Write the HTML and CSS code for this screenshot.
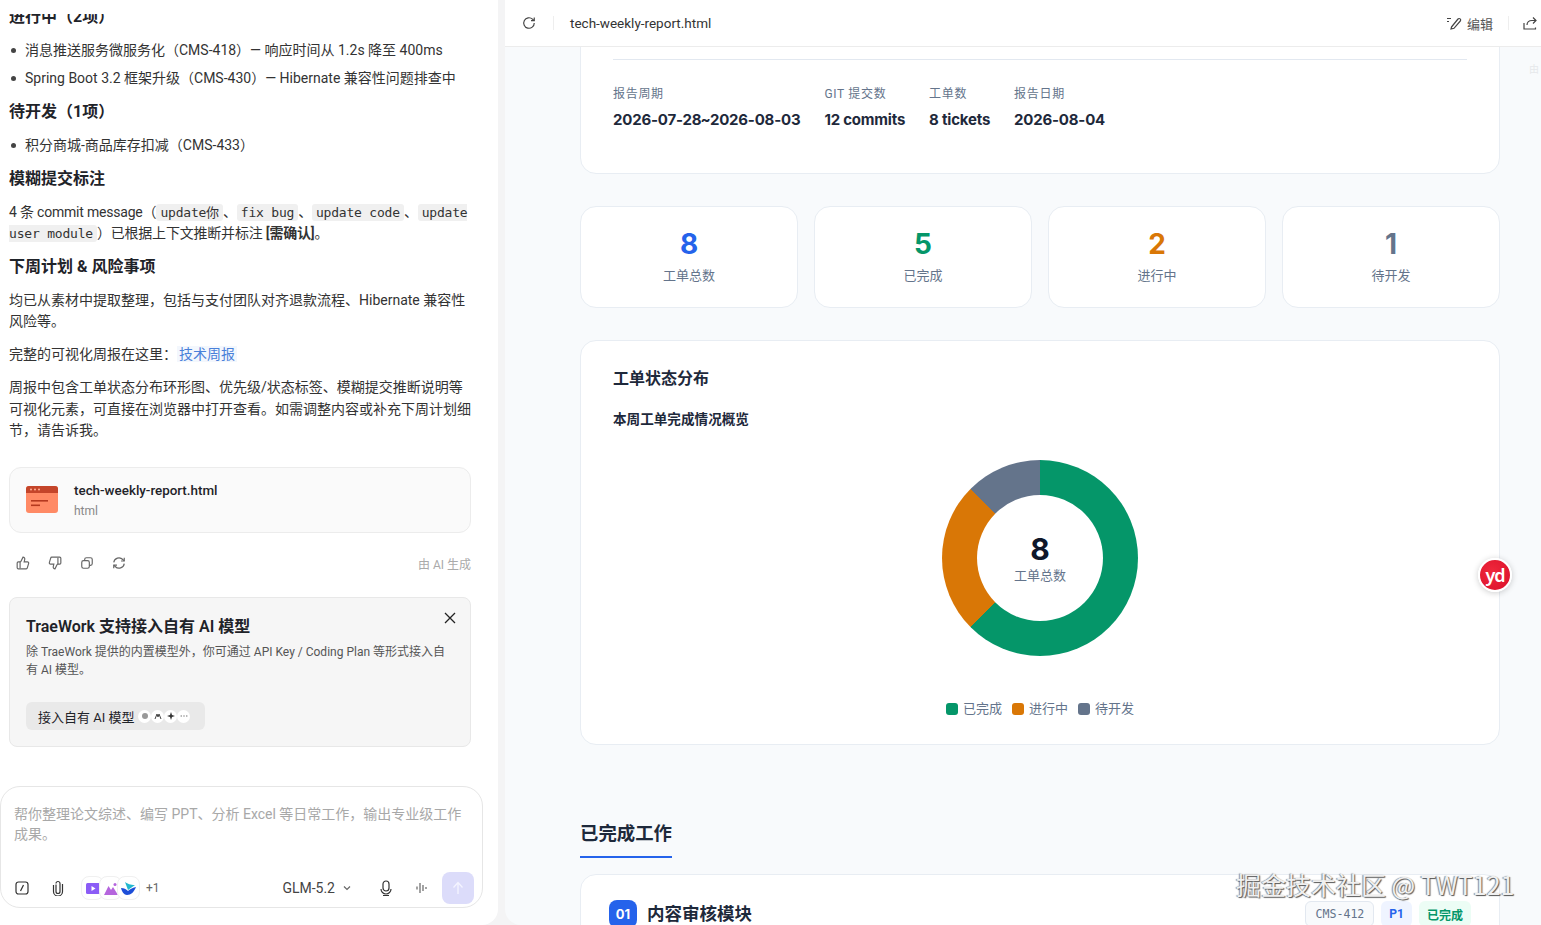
FILE: index.html
```html
<!DOCTYPE html>
<html lang="zh-CN">
<head>
    <meta charset="UTF-8">
    <title>tech-weekly-report.html</title>
    <link rel="stylesheet" href="styles.css">
</head>
<body>
    <aside class="left">
        <div class="chat">
            <div class="chat-inner">
                <h3>进行中（2项）</h3>
                <ul>
                    <li>消息推送服务微服务化（CMS-418）— 响应时间从 1.2s 降至 400ms</li>
                    <li>Spring Boot 3.2 框架升级（CMS-430）— Hibernate 兼容性问题排查中</li>
                </ul>
                <h3>待开发（1项）</h3>
                <ul>
                    <li>积分商城-商品库存扣减（CMS-433）</li>
                </ul>
                <h3>模糊提交标注</h3>
                <p class="tight">4 条 commit message（<code>update你</code>、<code>fix bug</code>、<code>update code</code>、<code>update user module</code>）已根据上下文推断并标注 <b>[需确认]</b>。</p>
                <h3>下周计划 &amp; 风险事项</h3>
                <p>均已从素材中提取整理，包括与支付团队对齐退款流程、Hibernate 兼容性风险等。</p>
                <p>完整的可视化周报在这里：<a class="link">技术周报</a></p>
                <p>周报中包含工单状态分布环形图、优先级/状态标签、模糊提交推断说明等可视化元素，可直接在浏览器中打开查看。如需调整内容或补充下周计划细节，请告诉我。</p>

                <div class="file-card">
                    <svg class="file-icon" width="32" height="28" viewBox="0 0 32 28">
                        <rect y="0" width="32" height="27" rx="3" fill="#ff8a65"/>
                        <path d="M0 7V3a3 3 0 0 1 3-3h26a3 3 0 0 1 3 3v4z" fill="#c4452a"/>
                        <circle cx="5" cy="3.6" r="1" fill="#ffb199"/>
                        <circle cx="9" cy="3.6" r="1" fill="#ffb199"/>
                        <circle cx="13" cy="3.6" r="1" fill="#ffb199"/>
                        <rect x="5" y="14" width="17" height="1.6" fill="#b5391f"/>
                        <rect x="5" y="18.5" width="9" height="1.6" fill="#b5391f"/>
                    </svg>
                    <div class="file-text">
                        <div class="file-name">tech-weekly-report.html</div>
                        <div class="file-type">html</div>
                    </div>
                </div>

                <div class="actions">
                    <svg class="ico" viewBox="0 0 24 24"><path d="M7 10v11"/><path d="M15 5.9 14 10h5.8a2 2 0 0 1 1.9 2.5l-2.3 8a2 2 0 0 1-1.9 1.5H4a2 2 0 0 1-2-2v-8a2 2 0 0 1 2-2h2.800a2 2 0 0 0 1.800-1.100L12 2a3.100 3.100 0 0 1 3 3.900z"/></svg>
                    <svg class="ico" viewBox="0 0 24 24"><path d="M17 14V3"/><path d="M9 18.100 10 14H4.200a2 2 0 0 1-1.900-2.500l2.300-8A2 2 0 0 1 6.500 2H20a2 2 0 0 1 2 2v8a2 2 0 0 1-2 2h-2.800a2 2 0 0 0-1.800 1.100L12 22a3.100 3.100 0 0 1-3-3.900z"/></svg>
                    <svg class="ico" viewBox="0 0 24 24"><rect x="3" y="8" width="13" height="13" rx="3"/><path d="M8 8V6a3 3 0 0 1 3-3h7a3 3 0 0 1 3 3v7a3 3 0 0 1-3 3h-2"/></svg>
                    <svg class="ico" viewBox="0 0 24 24"><path d="M3 11a9 9 0 0 1 15.500-5L21 8.500"/><path d="M21 3v5.500h-5.500"/><path d="M21 13a9 9 0 0 1-15.500 5L3 15.500"/><path d="M3 21v-5.500h5.500"/></svg>
                    <span class="ai-note">由 AI 生成</span>
                </div>

                <div class="banner">
                    <svg class="banner-close" width="14" height="14" viewBox="0 0 14 14"><path d="M2 2l10 10M12 2 2 12"/></svg>
                    <div class="banner-title">TraeWork 支持接入自有 AI 模型</div>
                    <div class="banner-text">除 TraeWork 提供的内置模型外，你可通过 API Key / Coding Plan 等形式接入自有 AI 模型。</div>
                    <div class="banner-btn">
                        接入自有 AI 模型
                        <span class="dots">
                            <i class="dot"><svg width="8" height="8" viewBox="0 0 8 8"><circle cx="4" cy="4" r="3" fill="#999"/></svg></i>
                            <i class="dot"><svg width="8" height="8" viewBox="0 0 8 8"><path d="M1 7 3 2l1 3 1-3 2 5" fill="none" stroke="#444" stroke-width="1"/></svg></i>
                            <i class="dot"><svg width="8" height="8" viewBox="0 0 8 8"><path d="M4 0l1 3 3 1-3 1-1 3-1-3-3-1 3-1z" fill="#333"/></svg></i>
                            <i class="dot"><svg width="8" height="8" viewBox="0 0 8 8"><circle cx="1.200" cy="4" r=".7" fill="#777"/><circle cx="4" cy="4" r=".7" fill="#777"/><circle cx="6.800" cy="4" r=".7" fill="#777"/></svg></i>
                        </span>
                    </div>
                </div>
            </div>
        </div>

        <div class="composer">
            <div class="placeholder">帮你整理论文综述、编写 PPT、分析 Excel 等日常工作，输出专业级工作成果。</div>
            <div class="toolbar">
                <svg class="tool-slash" width="14" height="14" viewBox="0 0 14 14"><rect x="1" y="1" width="12" height="12" rx="2.500"/><path d="M8.500 4 5.500 10"/></svg>
                <svg class="tool-clip" width="14" height="16" viewBox="0 0 14 16"><path d="M5 4.500v7a2 2 0 0 0 4 0V3.500a2 2 0 0 0-4 0"/><path d="M2.500 5v6.500a4.500 4.500 0 0 0 9 0V4"/></svg>
                <div class="skills">
                    <span class="skill">
                        <svg width="14" height="13" viewBox="0 0 14 13"><rect width="14" height="11" y="1" rx="1.500" fill="#8b5cf6"/><path d="M5.500 4v5l4-2.500z" fill="#fff"/></svg>
                    </span>
                    <span class="skill">
                        <svg width="14" height="13" viewBox="0 0 14 13"><path d="M0 13 4.500 4 7 8l2-3 5 8z" fill="#b565dd"/><circle cx="11" cy="2.500" r="1.500" fill="#b565dd"/></svg>
                    </span>
                    <span class="skill">
                        <svg width="15" height="13" viewBox="0 0 15 13"><path d="M0 6c3 0 5 1 7 3 2-2 4-3 8-4-2 5-5 8-9 8-3 0-5-3-6-7z" fill="#1d4ed8"/><path d="M4 0c3 2 5 3 10 3l-7 5C6 5 5 3 4 0z" fill="#22b8cf"/></svg>
                    </span>
                </div>
                <span class="plus-one">+1</span>
                <span class="model">GLM-5.2</span>
                <svg class="chev" width="8" height="6" viewBox="0 0 8 6"><path d="M1 1.500 4 4.500 7 1.500"/></svg>
                <svg class="tool-mic" width="14" height="17" viewBox="0 0 14 17"><rect x="4" y="1" width="6" height="10" rx="3"/><path d="M2 9a5 5 0 0 0 10 0M4 15.500h6"/></svg>
                <svg class="tool-bars" width="14" height="12" viewBox="0 0 14 12"><path d="M2 4.500v3M5 1v10M8 3v6M11 5v2"/></svg>
                <span class="send"><svg width="12" height="14" viewBox="0 0 12 14"><path d="M6 13V2M1.500 6.500 6 1.500l4.500 5"/></svg></span>
            </div>
        </div>
    </aside>

    <main class="right">
        <header class="topbar">
            <svg class="top-ico" width="14" height="14" viewBox="0 0 24 24"><path d="M21 12a9 9 0 1 1-3-6.700L21 8"/><path d="M21 2.500V8h-5.500"/></svg>
            <span class="top-sep"></span>
            <span class="top-file">tech-weekly-report.html</span>
            <span class="top-edit">
                <svg class="top-ico" width="16" height="14" viewBox="0 0 16 14"><path d="M1 2.500h4M1 5.500h2M5.500 11 12 3a1.500 1.500 0 0 1 2.300 2L8 12.300l-3 .7z"/></svg>
                编辑
            </span>
            <span class="top-sep top-sep-right"></span>
            <svg class="top-ico" width="14" height="14" viewBox="0 0 14 14"><path d="M1 7v6h11.500v-1.500"/><path d="M4 9c0-3 2-4.500 5-4.500h4"/><path d="M10 1.500l3 3-3 3"/></svg>
        </header>

        <div class="report">
            <section class="card hero">
                <div class="hero-line"></div>
                <div class="meta">
                    <div>
                        <div class="meta-label">报告周期</div>
                        <div class="meta-value range">2026-07-28 ~ 2026-08-03</div>
                    </div>
                    <div>
                        <div class="meta-label">GIT 提交数</div>
                        <div class="meta-value">12 commits</div>
                    </div>
                    <div>
                        <div class="meta-label">工单数</div>
                        <div class="meta-value">8 tickets</div>
                    </div>
                    <div>
                        <div class="meta-label">报告日期</div>
                        <div class="meta-value">2026-08-04</div>
                    </div>
                </div>
            </section>

            <section class="stats">
                <div class="card stat"><div class="stat-num blue">8</div><div class="stat-label">工单总数</div></div>
                <div class="card stat"><div class="stat-num green">5</div><div class="stat-label">已完成</div></div>
                <div class="card stat"><div class="stat-num orange">2</div><div class="stat-label">进行中</div></div>
                <div class="card stat"><div class="stat-num slate">1</div><div class="stat-label">待开发</div></div>
            </section>

            <section class="card chart-card">
                <h2>工单状态分布</h2>
                <h4>本周工单完成情况概览</h4>
                <div class="donut">
                    <div class="donut-hole">
                        <div class="donut-num">8</div>
                        <div class="donut-label">工单总数</div>
                    </div>
                </div>
                <div class="legend">
                    <span class="legend-item"><i class="sw sw-green"></i>已完成</span>
                    <span class="legend-item"><i class="sw sw-orange"></i>进行中</span>
                    <span class="legend-item"><i class="sw sw-slate"></i>待开发</span>
                </div>
            </section>

            <h2 class="section-title">已完成工作</h2>

            <section class="card work">
                <div class="work-head">
                    <span class="work-no">01</span>
                    <span class="work-title">内容审核模块</span>
                    <span class="tags">
                        <span class="tag tag-id">CMS-412</span>
                        <span class="tag tag-p">P1</span>
                        <span class="tag tag-done">已完成</span>
                    </span>
                </div>
            </section>
        </div>

        <span class="ghost">由</span>
    </main>

    <div class="yd">yd</div>
    <div class="watermark">掘金技术社区 @ TWT121</div>
</body>
</html>
```

FILE: styles.css
```css
* {
    box-sizing: border-box;
}
html, body {
    height: 100%;
}
body {
    margin: 0;
    height: 925px;
    overflow: hidden;
    display: flex;
    background-color: #f4f4f5;
    color: #1f2329;
    font-family: Roboto, "Noto Sans CJK SC", sans-serif;
    font-size: 14px;
}

/* left column */
.left {
    width: 498px;
    flex-shrink: 0;
    display: flex;
    flex-direction: column;
    background-color: white;
    border-bottom-right-radius: 16px;
    padding-top: 14px;
}
.chat {
    flex: 1;
    overflow: hidden;
}
.chat-inner {
    margin-top: -9px;
    padding: 0 27px 0 9px;
}
h3 {
    margin: 0 0 7px;
    font-size: 16px;
    line-height: 24px;
    font-weight: 700;
    color: #1f2329;
}
ul {
    margin: 7px 0 8px;
    padding-left: 16px;
    line-height: 28px;
    color: #333;
    list-style: none;
}
li {
    position: relative;
}
li::before {
    content: "";
    position: absolute;
    top: 12px;
    left: -14px;
    width: 5px;
    height: 5px;
    border-radius: 50%;
    background-color: #444;
}
p {
    margin: 10.500px 0 11px;
    line-height: 21.300px;
    color: #333;
}
p + p {
    margin-top: 12px;
}
.tight {
    letter-spacing: -0.2px;
}
b {
    font-weight: 600;
}
code {
    font-family: "DejaVu Sans Mono", monospace;
    font-size: 13px;
    line-height: 1;
    background-color: #f0f0f0;
    border-radius: 3px;
    padding: 1px 4px;
}
.link {
    color: #4a80d9;
    background-color: #f3f7fd;
    padding: 0 2px;
}
.file-card {
    margin-top: 26px;
    height: 66px;
    display: flex;
    align-items: center;
    gap: 16px;
    padding: 0 16px;
    background-color: #fafafa;
    border: 1px solid #ececec;
    border-radius: 12px;
}
.file-text {
    padding-top: 2px;
}
.file-name {
    font-size: 13.400px;
    font-weight: 500;
    line-height: 20px;
}
.file-type {
    font-size: 12px;
    line-height: 20px;
    color: #888;
}
.actions {
    margin-top: 22px;
    height: 16px;
    display: flex;
    align-items: center;
    gap: 18px;
    padding-left: 7px;
}
.ico {
    width: 14px;
    height: 14px;
    fill: none;
    stroke: #666;
    stroke-width: 2;
}
.ai-note {
    margin-left: auto;
    font-size: 12px;
    color: #aaa;
}
.banner {
    position: relative;
    margin-top: 26px;
    height: 150px;
    padding: 17px 16px 16px;
    background-color: #f6f6f6;
    border: 1px solid #e8e8e8;
    border-radius: 8px;
}
.banner-close {
    position: absolute;
    top: 13px;
    right: 13px;
    fill: none;
    stroke: #222;
    stroke-width: 1.300;
}
.banner-title {
    font-size: 16px;
    font-weight: 600;
    line-height: 24px;
}
.banner-text {
    margin-top: 4px;
    font-size: 12px;
    line-height: 18px;
    color: #555;
}
.banner-btn {
    margin-top: 23px;
    width: 179px;
    height: 28px;
    display: flex;
    align-items: center;
    padding-left: 12px;
    gap: 4px;
    font-size: 13px;
    background-color: #e9e9e9;
    border-radius: 6px;
}
.dots {
    display: flex;
}
.dot {
    width: 13px;
    height: 13px;
    display: flex;
    align-items: center;
    justify-content: center;
    background-color: white;
    border-radius: 50%;
}

/* input box */
.composer {
    width: 483px;
    height: 122px;
    margin-bottom: 17px;
    padding: 17px 8px 3px 13px;
    display: flex;
    flex-direction: column;
    justify-content: space-between;
    background-color: white;
    border: 1px solid #e6e6e6;
    border-radius: 20px;
}
.placeholder {
    color: #a8a8a8;
    line-height: 20px;
}
.toolbar {
    display: flex;
    align-items: center;
    height: 32px;
    padding-left: 1px;
}
.tool-slash, .tool-clip, .tool-mic, .tool-bars, .chev {
    fill: none;
    stroke: #333;
    stroke-width: 1.200;
}
.tool-clip {
    margin-left: 22px;
}
.skills {
    margin-left: 16px;
    display: flex;
}
.skill {
    width: 23px;
    height: 24px;
    margin-right: -5px;
    display: flex;
    align-items: center;
    justify-content: center;
    background-color: white;
    border: 1px solid #f0f0f0;
    border-radius: 8px;
}
.plus-one {
    margin-left: 11px;
    font-size: 12px;
    color: #666;
}
.model {
    margin-left: auto;
    font-size: 14px;
    color: #444;
}
.chev {
    margin-left: 8px;
    stroke: #666;
}
.tool-mic {
    margin-left: 28px;
}
.tool-bars {
    margin-left: 22px;
    stroke: #666;
}
.send {
    margin-left: 13px;
    width: 32px;
    height: 32px;
    display: flex;
    align-items: center;
    justify-content: center;
    background-color: #dcdcfa;
    border-radius: 8px;
}
.send svg {
    fill: none;
    stroke: #f4f4ff;
    stroke-width: 1.300;
}

/* right column */
.right {
    position: relative;
    margin-left: 7px;
    flex: 1;
    display: flex;
    flex-direction: column;
    overflow: hidden;
    background-color: #f8fafc;
    border-bottom-left-radius: 16px;
}
.topbar {
    height: 47px;
    flex-shrink: 0;
    display: flex;
    align-items: center;
    padding: 0 4px 0 17px;
    background-color: white;
    border-bottom: 1px solid #ececec;
    position: relative;
    z-index: 1;
}
.top-ico {
    fill: none;
    stroke: #444;
    stroke-width: 1.200;
}
.topbar > .top-ico:first-child {
    stroke-width: 2;
}
.top-sep {
    width: 1px;
    height: 14px;
    margin: 0 16px 0 17px;
    background-color: #eee;
}
.top-sep-right {
    margin: 0 14px 0 15px;
}
.top-file {
    font-size: 13.500px;
    color: #333;
}
.top-edit {
    margin-left: auto;
    display: flex;
    align-items: center;
    gap: 5px;
    font-size: 13px;
    color: #555;
}
.report {
    padding: 0 41px 0 75px;
}
.card {
    background-color: white;
    border: 1px solid #e8edf3;
    border-radius: 16px;
}
.hero {
    margin-top: -41px;
    height: 168px;
    padding: 52px 32px 0;
}
.hero-line {
    height: 1px;
    background-color: #e2e8f0;
}
.meta {
    margin-top: 25px;
    display: flex;
    gap: 24px;
}
.meta-label {
    font-size: 12px;
    line-height: 18px;
    letter-spacing: 0.7px;
    color: #64748b;
}
.meta-value {
    margin-top: 8px;
    font-family: Inter, "Noto Sans CJK SC", sans-serif;
    font-size: 15px;
    font-weight: 700;
    line-height: 18px;
    letter-spacing: -0.2px;
    color: #1e293b;
}
.range {
    word-spacing: -4px;
}
.stats {
    margin-top: 32px;
    display: grid;
    grid-template-columns: repeat(4, 1fr);
    gap: 16px;
}
.stat {
    height: 102px;
    padding-top: 20px;
    text-align: center;
}
.stat-num {
    font-family: Inter, sans-serif;
    font-size: 28px;
    font-weight: 700;
    line-height: 34px;
}
.stat-label {
    margin-top: 5px;
    font-size: 13px;
    line-height: 20px;
    color: #64748b;
}
.blue { color: #2563eb; }
.green { color: #059669; }
.orange { color: #d97706; }
.slate { color: #64748b; }
.chart-card {
    margin-top: 32px;
    height: 405px;
    padding: 25px 32px 0;
}
.chart-card h2 {
    margin: 0;
    font-size: 16px;
    line-height: 26px;
    font-weight: 700;
    color: #1e293b;
}
.chart-card h4 {
    margin: 18px 0 0;
    font-size: 13.600px;
    line-height: 18px;
    font-weight: 700;
    color: #1e293b;
}
.donut {
    width: 196px;
    height: 196px;
    margin: 32px auto 0;
    display: flex;
    align-items: center;
    justify-content: center;
    border-radius: 50%;
    background: conic-gradient(#059669 0 225deg, #d97706 225deg 315deg, #64748b 315deg 360deg);
}
.donut-hole {
    width: 126px;
    height: 126px;
    display: flex;
    flex-direction: column;
    align-items: center;
    justify-content: center;
    background-color: white;
    border-radius: 50%;
}
.donut-num {
    font-family: Inter, sans-serif;
    font-size: 30px;
    font-weight: 700;
    line-height: 36px;
    color: #0f172a;
}
.donut-label {
    margin-top: -1px;
    font-size: 13px;
    line-height: 20px;
    color: #64748b;
}
.legend {
    margin-top: 43px;
    display: flex;
    justify-content: center;
    gap: 10px;
}
.legend-item {
    display: flex;
    align-items: center;
    gap: 5px;
    font-size: 13px;
    line-height: 20px;
    color: #64748b;
}
.sw {
    width: 12px;
    height: 12px;
    border-radius: 3px;
}
.sw-green { background-color: #059669; }
.sw-orange { background-color: #d97706; }
.sw-slate { background-color: #64748b; }
.section-title {
    display: inline-block;
    margin: 76px 0 0;
    padding-bottom: 9px;
    font-size: 18.400px;
    line-height: 26px;
    font-weight: 700;
    color: #1e293b;
    border-bottom: 2px solid #2563eb;
}
.work {
    margin-top: 16px;
    height: 120px;
    padding: 25px 28px;
}
.work-head {
    display: flex;
    align-items: center;
    gap: 10px;
}
.work-no {
    width: 28px;
    height: 28px;
    display: flex;
    align-items: center;
    justify-content: center;
    font-family: Inter, sans-serif;
    font-size: 13px;
    font-weight: 700;
    color: white;
    background-color: #2563eb;
    border-radius: 8px;
}
.work-title {
    padding-bottom: 3px;
    font-size: 17.500px;
    font-weight: 700;
    color: #1e293b;
}
.tags {
    margin-left: auto;
    display: flex;
    gap: 7px;
}
.tag {
    height: 26px;
    padding: 0 8px;
    display: flex;
    align-items: center;
    font-size: 12px;
    border-radius: 6px;
}
.tag-id {
    padding: 0 9px;
    font-family: "DejaVu Sans Mono", monospace;
    font-size: 11.600px;
    color: #64748b;
    background-color: #f8fafc;
    border: 1px solid #e2e8f0;
}
.tag-p {
    font-weight: 700;
    color: #2563eb;
    background-color: #eff4ff;
}
.tag-done {
    font-weight: 700;
    color: #059669;
    background-color: #ecfdf5;
}
.ghost {
    position: absolute;
    top: 61px;
    right: 2px;
    font-size: 10px;
    color: #e6e8eb;
}

/* things floating above the page */
.yd {
    position: absolute;
    top: 558px;
    left: 1478px;
    width: 34px;
    height: 34px;
    display: flex;
    align-items: center;
    justify-content: center;
    font-family: "Noto Sans", sans-serif;
    font-size: 18px;
    font-weight: 600;
    letter-spacing: -1px;
    color: white;
    background: radial-gradient(circle at 40% 40%, #f0283c, #d9102a);
    border: 2px solid white;
    border-radius: 50%;
    box-shadow: 0 1px 6px rgba(0, 0, 0, 0.2);
}
.watermark {
    position: absolute;
    top: 866px;
    left: 1236px;
    font-family: "Noto Sans CJK SC", sans-serif;
    font-size: 25px;
    line-height: 36px;
    white-space: nowrap;
    color: #f0f0f0;
    text-shadow: 1px 1px 1px #555, -1px 0 1px #888;
}
```
